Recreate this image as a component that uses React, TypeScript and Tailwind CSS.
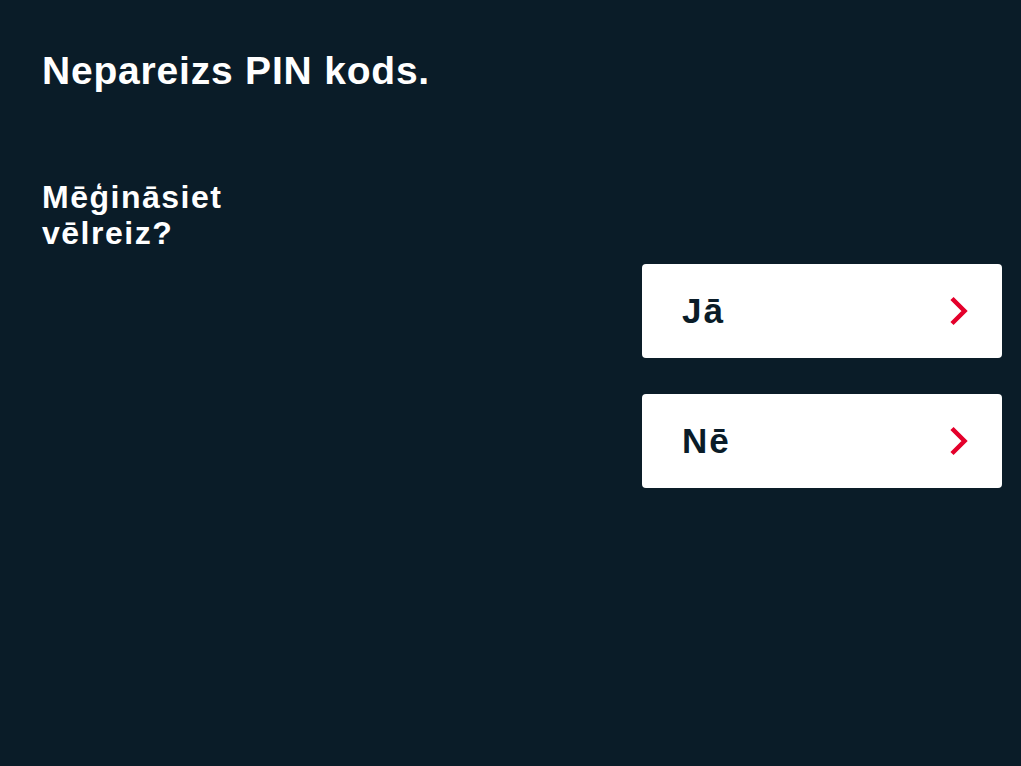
function Chevron() {
  return (
    <svg width="22" height="30" viewBox="0 0 22 30" fill="none">
      <path d="M4 2.5 L16.5 15 L4 27.5" stroke="#e4002b" strokeWidth="4.5" />
    </svg>
  );
}

function Choice({ label }: { label: string }) {
  return (
    <button className="flex items-center justify-between w-[360px] h-[94px] bg-white rounded-[4px] pl-10 pr-[32px] text-[#0a1c28]">
      <span className="text-[35px] font-bold tracking-[2px]">{label}</span>
      <Chevron />
    </button>
  );
}

export default function App() {
  return (
    <div
      className="min-h-[766px] bg-[#0a1c28] text-white flex flex-col"
      style={{ fontFamily: '"Liberation Sans", Arial, sans-serif' }}
    >
      <h1 className="pl-[42px] pt-[49px] text-[39px] font-bold leading-[44px] tracking-[0.8px]">
        Nepareizs PIN kods.
      </h1>
      <p className="pl-[42px] mt-[86px] text-[32px] font-bold leading-[36px] tracking-[1.5px]">
        Mēģināsiet
        <br />
        vēlreiz?
      </p>
      <div className="flex flex-col items-end gap-[36px] pr-[19px] mt-[13px]">
        <Choice label="Jā" />
        <Choice label="Nē" />
      </div>
    </div>
  );
}
